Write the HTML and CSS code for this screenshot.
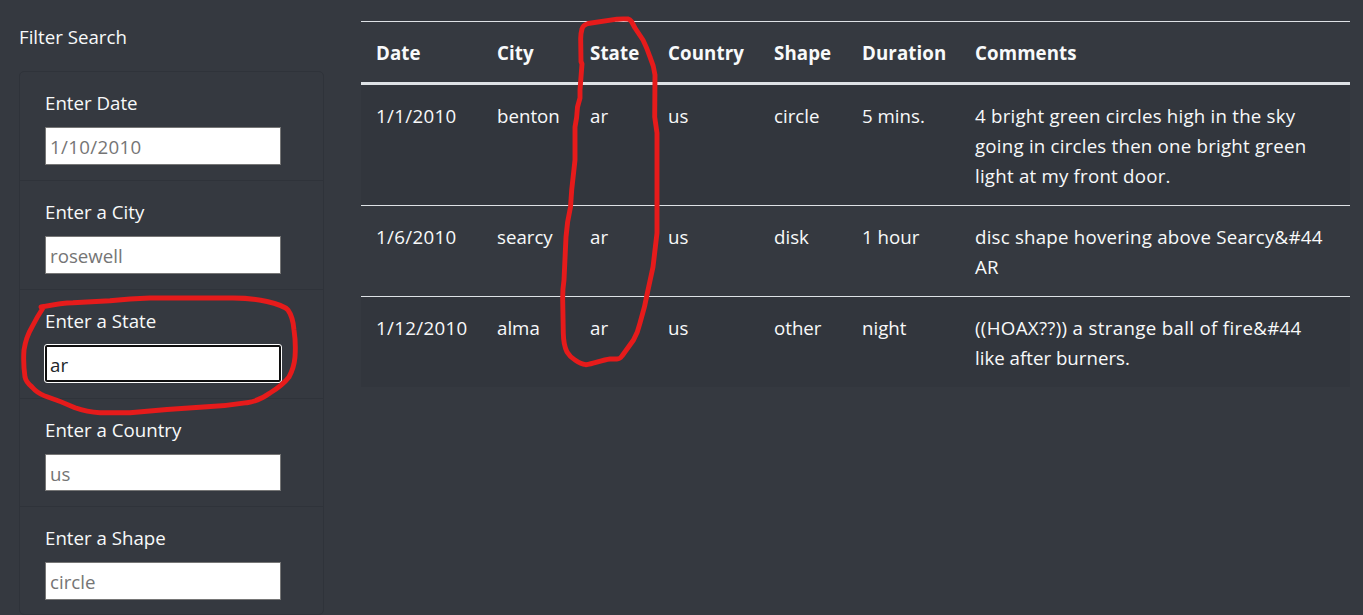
FILE: index.html
```html
<!DOCTYPE html>
<html lang="en">
<head>
<meta charset="utf-8">
<title>Filter Search</title>
<link rel="stylesheet" href="styles.css">
</head>
<body>
<div class="layout">
  <aside class="filters">
    <p class="filters-title">Filter Search</p>
    <ul class="filter-list">
      <li class="filter"><label for="date">Enter Date</label><input id="date" class="numeric" type="text" placeholder="1/10/2010"></li>
      <li class="filter"><label for="city">Enter a City</label><input id="city" type="text" placeholder="rosewell"></li>
      <li class="filter"><label for="state">Enter a State</label><input id="state" class="active" type="text" value="ar"></li>
      <li class="filter short"><label for="country">Enter a Country</label><input id="country" type="text" placeholder="us"></li>
      <li class="filter"><label for="shape">Enter a Shape</label><input id="shape" type="text" placeholder="circle"></li>
    </ul>
  </aside>
  <main class="results">
    <table class="sightings">
      <colgroup><col class="c-date"><col class="c-city"><col class="c-state"><col class="c-country"><col class="c-shape"><col class="c-duration"><col></colgroup>
      <thead>
        <tr><th>Date</th><th>City</th><th>State</th><th>Country</th><th>Shape</th><th>Duration</th><th>Comments</th></tr>
      </thead>
      <tbody>
        <tr><td class="numeric">1/1/2010</td><td>benton</td><td>ar</td><td>us</td><td>circle</td><td>5 mins.</td><td class="comment">4 bright green circles high in the sky<br>going in circles then one bright green<br>light at my front door.</td></tr>
        <tr><td class="numeric">1/6/2010</td><td>searcy</td><td>ar</td><td>us</td><td>disk</td><td>1 hour</td><td class="comment">disc shape hovering above Searcy&amp;#44<br>AR</td></tr>
        <tr><td class="numeric">1/12/2010</td><td>alma</td><td>ar</td><td>us</td><td>other</td><td>night</td><td class="comment"><span class="wide">((HOAX??)) a strange ball of fire&amp;#44</span><br><span class="tight">like after burners.</span></td></tr>
      </tbody>
    </table>
  </main>
</div>
<svg class="ink" width="1363" height="615" viewBox="0 0 1363 615" aria-hidden="true">
  <path d="M41 307C51 305 62 303 73 302.7L110 300.7Q130 298.5 150 298H233Q252 298 267 301.5Q283 305 288 310Q293 317 294 330Q296 343 295 357Q294 368 289 377Q283 385 270 393Q259 401 247 402.7Q227 406 207 406.7L167 409.5L130 412.7H100Q87 412 75 407.7Q60 401 45 396Q37 393 32 387Q26 382 25 377Q23 363 24 350Q26 337 32 327Q37 317 43 308"/>
  <path d="M628 19Q622 18.6 617 19.2L588 23.5Q583 25 582 29Q580.5 34 580.7 40L581 61.5L582 64L580 90V98L577.5 107Q577 118 575 127V160L571.7 190L570.5 207Q567 222 566 237L564 280Q562.5 290 562.7 300L563.3 333Q563.5 345 567 352Q570 357 575 360Q581 364 585.7 364.7C594 364 601 360 610 359H617Q620 359 622 356L633.5 340Q638 332 640 323Q645 307 648 290L653 267L657 233V133L654.7 117L655 75Q654 66 650 57Q647 48 643 40L635 28L631.5 21.5Q630 19.4 628 19"/>
</svg>
</body>
</html>
```
FILE: styles.css
```css
* { box-sizing: border-box; }
body {
  margin: 0;
  height: 615px;
  overflow: hidden;
  background: #353940;
  color: #f8f9fa;
  font-family: "Open Sans", "Noto Sans", sans-serif;
  font-size: 18.7px;
  line-height: 30px;
}
.layout { display: flex; }
.filters { width: 361px; flex: none; padding: 22px 37px 0 19px; }
.filters-title { margin: 0 0 19px; }
.filter-list {
  list-style: none;
  margin: 0;
  padding: 0;
  border: 1px solid #2f333a;
  border-radius: 5px;
}
.filter { height: 109px; padding: 16px 25px 0; border-bottom: 1px solid #2f333a; }
.filter.short { height: 108px; }
.filter:last-child { height: 107px; border-bottom: 0; }
.filter label { display: block; margin-bottom: 9px; }
.filter input {
  display: block;
  width: 236px;
  height: 38px;
  margin: 0;
  padding: 1px 4px 0;
  border: 1px solid #767676;
  background: #fff;
  color: #212529;
  font: inherit;
}
.filter.short input { height: 37px; }
.filter input::placeholder { color: #757575; opacity: 1; }
.filter input.active {
  height: 37px;
  border: 2px solid #101010;
  padding: 2px 3px 0;
  outline: 1px solid #fff;
  border-radius: 2px;
}
.results { flex: 1; padding: 21px 13px 0 0; }
.sightings { width: 100%; table-layout: fixed; border-collapse: separate; border-spacing: 0; }
.c-date { width: 121px; }
.c-city { width: 93px; }
.c-state { width: 78px; }
.c-country { width: 106px; }
.c-shape { width: 88px; }
.c-duration { width: 113px; }
.sightings th, .sightings td {
  padding: 16px 0 14px 15px;
  border-top: 1px solid #dee2e6;
  text-align: left;
  vertical-align: top;
  white-space: nowrap;
}
.sightings th { border-bottom: 3px solid #dee2e6; font-weight: 700; letter-spacing: 0.1px; }
.sightings tbody tr:first-child td { border-top: 0; }
.sightings tbody tr:nth-child(odd) { background: #32363d; }
.filters .numeric, .sightings .numeric { letter-spacing: 0.35px; }
.sightings .comment { letter-spacing: 0.22px; }
.wide { letter-spacing: 0.33px; }
.tight { letter-spacing: 0; }
.ink { position: absolute; top: 0; left: 0; pointer-events: none; }
.ink path { fill: none; stroke: #e61b1b; stroke-width: 4.9; stroke-linecap: round; stroke-linejoin: round; }
```
